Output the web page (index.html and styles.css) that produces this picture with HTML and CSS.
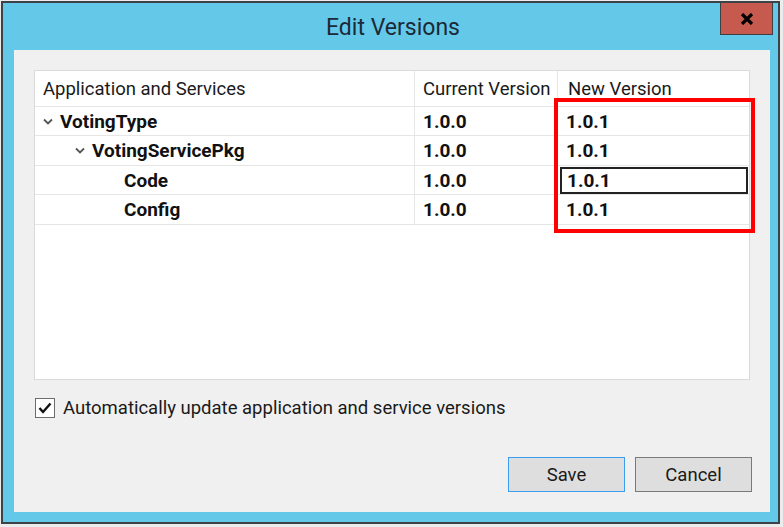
FILE: index.html
```html
<!DOCTYPE html>
<html>
<head>
<meta charset="utf-8">
<link rel="stylesheet" href="styles.css">
</head>
<body>
<div class="window">
  <div class="titlebar">
    <div class="title">Edit Versions</div>
    <div class="close"><svg width="14" height="12" viewBox="0 0 14 12"><path d="M2 1 L12 11 M12 1 L2 11" stroke="#000" stroke-width="3.2"/></svg></div>
  </div>
  <div class="client">
    <div class="table">
      <div class="row head">
        <div class="cell c1">Application and Services</div>
        <div class="cell c2">Current Version</div>
        <div class="cell c3">New Version</div>
      </div>
      <div class="row">
        <div class="cell c1 b lvl0"><svg class="chev" width="10" height="7" viewBox="0 0 10 7"><path d="M1 1.5 L5 5.5 L9 1.5" fill="none" stroke="#555" stroke-width="1.8"/></svg>VotingType</div>
        <div class="cell c2 b">1.0.0</div>
        <div class="cell c3 b">1.0.1</div>
      </div>
      <div class="row">
        <div class="cell c1 b lvl1"><svg class="chev" width="10" height="7" viewBox="0 0 10 7"><path d="M1 1.5 L5 5.5 L9 1.5" fill="none" stroke="#555" stroke-width="1.8"/></svg>VotingServicePkg</div>
        <div class="cell c2 b">1.0.0</div>
        <div class="cell c3 b">1.0.1</div>
      </div>
      <div class="row">
        <div class="cell c1 b lvl2">Code</div>
        <div class="cell c2 b">1.0.0</div>
        <div class="cell c3 b"><span class="edit">1.0.1</span></div>
      </div>
      <div class="row">
        <div class="cell c1 b lvl2">Config</div>
        <div class="cell c2 b">1.0.0</div>
        <div class="cell c3 b">1.0.1</div>
      </div>
      <div class="fill"></div>
      <div class="highlight"></div>
    </div>
    <label class="check">
      <span class="box"><svg width="14" height="12" viewBox="0 0 14 12"><path d="M1.5 6 L5 10 L12.5 1.5" fill="none" stroke="#111" stroke-width="2.4"/></svg></span>
      <span>Automatically update application and service versions</span>
    </label>
    <div class="buttons">
      <div class="btn primary">Save</div>
      <div class="btn">Cancel</div>
    </div>
  </div>
</div>
</body>
</html>
```
FILE: styles.css
```css
html, body { margin: 0; padding: 0; }
body {
  background: #ececec;
  width: 783px;
  height: 527px;
  overflow: hidden;
  font-family: Roboto, "Noto Sans", sans-serif;
}
.window {
  margin: 1px 0 0 1px;
  border: 2px solid #3d4247;
  background: #64c8e9;
  display: flex;
  flex-direction: column;
  padding: 0 8px 10px 11px;
  box-sizing: border-box;
  width: 779px;
  height: 523px;
}
.titlebar {
  height: 47px;
  flex: none;
  position: relative;
  display: flex;
  align-items: center;
  justify-content: center;
}
.title {
  font-size: 23px;
  color: #1c2a36;
  margin-left: 2px;
  margin-top: 2px;
}
.close {
  position: absolute;
  right: -3px;
  top: 0;
  width: 53px;
  height: 32px;
  background: #c75a4f;
  border: 1px solid #3f3f3f;
  border-top: none;
  box-sizing: border-box;
  display: flex;
  align-items: center;
  justify-content: center;
}
.client {
  flex: 1;
  background: #f0f0f0;
  padding: 20px 18px 20px 20px;
  display: flex;
  flex-direction: column;
}
.table {
  position: relative;
  width: 716px;
  height: 310px;
  background: #fff;
  border: 1px solid #dadada;
  box-sizing: border-box;
  display: flex;
  flex-direction: column;
}
.row {
  display: grid;
  grid-template-columns: 380px 143px 191px;
  height: 30px;
  border-bottom: 1px solid #e6e6e6;
  box-sizing: border-box;
  flex: none;
}
.row:nth-child(2), .row:nth-child(4) { height: 29px; }
.row.head { height: 36px; }
.cell {
  display: flex;
  align-items: center;
  font-size: 18.5px;
  color: #111;
  padding-left: 8px;
  border-right: 1px solid #e6e6e6;
  white-space: nowrap;
}
.cell.c3 { border-right: none; padding-left: 8px; }
.head .cell { color: #1a1a1a; }
.head .c3 { padding-left: 10px; }
.b { font-weight: 700; font-size: 19px; }
.lvl0 { padding-left: 8px; }
.lvl1 { padding-left: 40px; }
.lvl2 { padding-left: 89px; }
.chev { margin-right: 7px; flex: none; }
.edit {
  display: flex;
  align-items: center;
  width: 188px;
  height: 27px;
  margin-left: -6px;
  padding-left: 5px;
  border: 2px solid #222;
  box-sizing: border-box;
}
.fill { flex: 1; }
.highlight {
  position: absolute;
  left: 519px;
  top: 27px;
  width: 201px;
  height: 135px;
  border: 4px solid #ff0000;
  box-sizing: border-box;
  pointer-events: none;
}
.check {
  display: flex;
  align-items: center;
  margin-top: 17px;
  margin-left: 1px;
  font-size: 18.5px;
  color: #1a1a1a;
}
.box {
  width: 20px;
  height: 20px;
  border: 1px solid #6d6d6d;
  background: #fff;
  box-sizing: border-box;
  display: flex;
  align-items: center;
  justify-content: center;
  margin-right: 8px;
}
.buttons {
  margin-top: auto;
  display: flex;
  justify-content: flex-end;
  gap: 10px;
}
.btn {
  width: 117px;
  height: 35px;
  box-sizing: border-box;
  border: 1px solid #7a7a7a;
  background: #dedede;
  display: flex;
  align-items: center;
  justify-content: center;
  font-size: 18.5px;
  color: #1a1a1a;
}
.btn.primary { border-color: #3c9cf0; }
```
